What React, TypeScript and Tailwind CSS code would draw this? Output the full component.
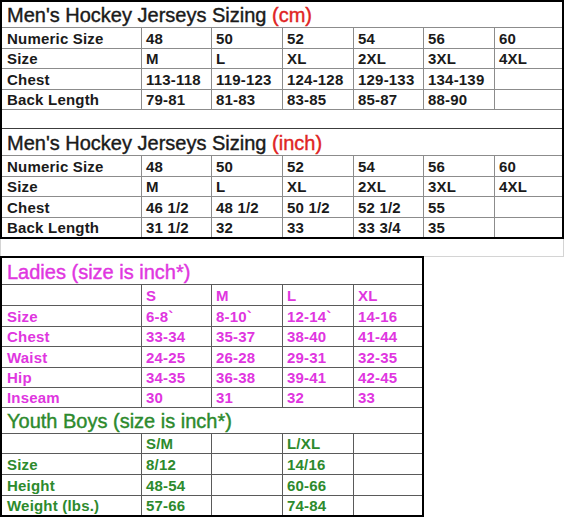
import React from "react";

type Row = string[];

const menCm: Row[] = [
  ["Numeric Size", "48", "50", "52", "54", "56", "60"],
  ["Size", "M", "L", "XL", "2XL", "3XL", "4XL"],
  ["Chest", "113-118", "119-123", "124-128", "129-133", "134-139", ""],
  ["Back Length", "79-81", "81-83", "83-85", "85-87", "88-90", ""],
];

const menIn: Row[] = [
  ["Numeric Size", "48", "50", "52", "54", "56", "60"],
  ["Size", "M", "L", "XL", "2XL", "3XL", "4XL"],
  ["Chest", "46 1/2", "48 1/2", "50 1/2", "52 1/2", "55", ""],
  ["Back Length", "31 1/2", "32", "33", "33 3/4", "35", ""],
];

const ladies: Row[] = [
  ["", "S", "M", "L", "XL"],
  ["Size", "6-8`", "8-10`", "12-14`", "14-16"],
  ["Chest", "33-34", "35-37", "38-40", "41-44"],
  ["Waist", "24-25", "26-28", "29-31", "32-35"],
  ["Hip", "34-35", "36-38", "39-41", "42-45"],
  ["Inseam", "30", "31", "32", "33"],
];

const youth: Row[] = [
  ["", "S/M", "", "L/XL", ""],
  ["Size", "8/12", "", "14/16", ""],
  ["Height", "48-54", "", "60-66", ""],
  ["Weight (lbs.)", "57-66", "", "74-84", ""],
];

function Cells({ rows, color }: { rows: Row[]; color: string }) {
  return (
    <>
      {rows.map((r, i) =>
        r.map((c, j) => (
          <div
            key={`${i}-${j}`}
            className={`bg-white flex items-center text-[15px] font-bold leading-none tracking-[0.2px] ${color} ${
              j === 0 ? "pl-[5px]" : "pl-[4px]"
            }`}
          >
            {c}
          </div>
        ))
      )}
    </>
  );
}

export default function App() {
  return (
    <div className="bg-white w-[566px] h-[518px] font-['Liberation_Sans',Arial,sans-serif] text-[#1a1a1a]">
      {/* Men's tables */}
      <div className="w-[564px] border-2 border-black">
        <div className="grid grid-cols-[139px_69px_70px_70px_69px_70px_67px] grid-rows-[25px_20px_19px_20px_19px_18px] gap-px bg-[#8c8c8c]">
          <div className="col-span-7 bg-white flex items-center pl-[5px] pt-px text-[20px] leading-none [-webkit-text-stroke:0.4px_currentColor]">
            Men's Hockey Jerseys Sizing&nbsp;<span className="text-[#e02424]">(cm)</span>
          </div>
          <Cells rows={menCm} color="text-[#1a1a1a]" />
          <div className="col-span-7 bg-white" />
        </div>
        <div className="h-px bg-[#3c3c3c]" />
        <div className="grid grid-cols-[139px_69px_70px_70px_69px_70px_67px] grid-rows-[26px_20px_19px_20px_19px] gap-px bg-[#8c8c8c]">
          <div className="col-span-7 bg-white flex items-center pl-[5px] pt-px text-[20px] leading-none [-webkit-text-stroke:0.4px_currentColor]">
            Men's Hockey Jerseys Sizing&nbsp;<span className="text-[#e02424]">(inch)</span>
          </div>
          <Cells rows={menIn} color="text-[#1a1a1a]" />
        </div>
      </div>

      {/* spacer with light grid lines */}
      <div className="w-[564px] h-[17px] border-x border-[#d4d4d4]" />

      {/* Ladies + Youth */}
      <div className="flex">
        <div className="w-[424px] border-2 border-black">
          <div className="grid grid-cols-[139px_69px_70px_70px_68px] grid-rows-[26px_20px_20px_19px_20px_19px_19px_25px_19px_20px_20px_19px] gap-px bg-[#5a5a5a]">
            <div className="col-span-5 bg-white flex items-center pl-[5px] pt-px text-[20px] leading-none text-[#e036e0] [-webkit-text-stroke:0.4px_currentColor]">
              Ladies (size is inch*)
            </div>
            <Cells rows={ladies} color="text-[#e036e0]" />
            <div className="col-span-5 bg-white flex items-center pl-[5px] pt-px text-[20px] leading-none text-[#2d8a2d] [-webkit-text-stroke:0.4px_currentColor]">
              Youth Boys (size is inch*)
            </div>
            <Cells rows={youth} color="text-[#2d8a2d]" />
          </div>
        </div>
        <div className="w-[140px] h-0 border-t border-[#d4d4d4]" />
      </div>
    </div>
  );
}
